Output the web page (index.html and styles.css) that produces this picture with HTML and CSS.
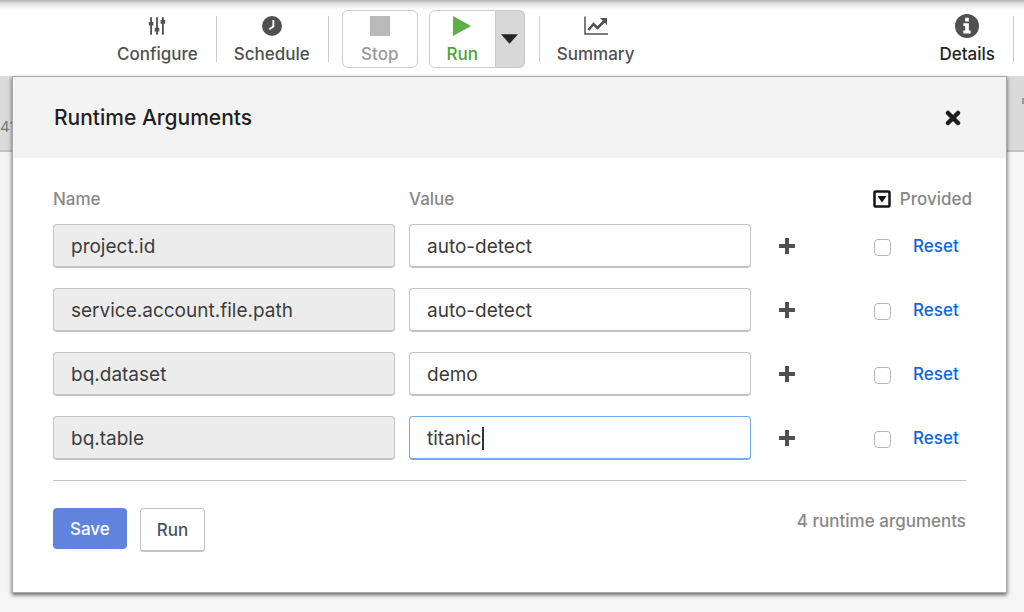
FILE: index.html
```html
<!DOCTYPE html>
<html lang="en">
<head>
<meta charset="utf-8">
<title>Runtime Arguments</title>
<link rel="stylesheet" href="styles.css">
</head>
<body>
<header class="toolbar">
  <button class="tool" type="button">
    <svg class="icon" viewBox="0 0 22 22" aria-hidden="true"><path d="M4.500 1.500v19M11 1.500v19M17.500 1.500v19" stroke="currentColor" stroke-width="2"/><path d="M2 6.500h5v4h-5zM8.500 13h5v4h-5zM15 4.500h5v4h-5z" fill="currentColor"/></svg>
    <span>Configure</span>
  </button>
  <button class="tool divided" type="button">
    <svg class="icon" viewBox="0 0 22 22" aria-hidden="true"><circle cx="11" cy="11" r="11" fill="currentColor"/><path d="M12.500 4.500v7L8 14.500" fill="none" stroke="#fff" stroke-width="2"/></svg>
    <span>Schedule</span>
  </button>
  <div class="actions divided">
    <button class="boxed stop" type="button" disabled>
      <svg class="icon" viewBox="0 0 22 22" aria-hidden="true"><path d="M0 0h22v22H0z" fill="#b9b9b9"/></svg>
      <span>Stop</span>
    </button>
    <div class="split">
      <button class="boxed run" type="button">
        <svg class="icon" viewBox="0 0 22 22" aria-hidden="true"><path d="M1 0l20 11L1 22z" fill="#5fae46"/></svg>
        <span>Run</span>
      </button>
      <button class="run-menu" type="button" aria-label="Run options">
        <svg class="caret" viewBox="0 0 18 10" aria-hidden="true"><path d="M0 0h18L9 10z" fill="#262626"/></svg>
      </button>
    </div>
  </div>
  <button class="tool divided" type="button">
    <svg class="icon wide" viewBox="0 0 26 22" aria-hidden="true"><path d="M2 1.500V19h23" fill="none" stroke="currentColor" stroke-width="1.500"/><path d="M5.500 15l5-6 4 4L22 5.500" fill="none" stroke="currentColor" stroke-width="2.500"/><path d="M17 3h7v7z" fill="currentColor"/></svg>
    <span>Summary</span>
  </button>
  <button class="tool details" type="button">
    <svg class="icon wide" viewBox="0 0 26 26" aria-hidden="true"><circle cx="13" cy="13" r="13" fill="currentColor"/><path d="M11 4h4v4h-4zM9 10h6v8h2v3H9v-3h2v-5H9z" fill="#fff"/></svg>
    <span>Details</span>
  </button>
  <div class="end divided"></div>
</header>
<div class="status-bar"><span>41</span><i class="status-dot"></i></div>

<section class="modal" role="dialog" aria-labelledby="title">
  <div class="modal-head">
    <h1 class="title" id="title">Runtime Arguments</h1>
    <button class="close" type="button" aria-label="Close"><svg viewBox="0 0 16 16" aria-hidden="true"><path d="M3 3l10 10M13 3L3 13" stroke="#1d1d1d" stroke-width="4.500" stroke-linecap="round"/></svg></button>
  </div>
  <form class="modal-body">
    <div class="row heads">
      <span id="h-name">Name</span>
      <span id="h-value">Value</span>
      <div class="provided">
        <button class="toggle-all" type="button" aria-label="Select provided"><svg viewBox="0 0 18 18" aria-hidden="true"><rect x="1.500" y="1.500" width="15" height="15" rx="1" fill="#fff" stroke="#151515" stroke-width="2.500"/><path d="M4.500 6h9L9 12.500z" fill="#151515"/></svg></button>
        <span>Provided</span>
      </div>
    </div>
    <div class="row">
      <input class="field" type="text" value="project.id" aria-labelledby="h-name" disabled>
      <input class="field" type="text" value="auto-detect" aria-labelledby="h-value">
      <div class="controls"><button class="add" type="button" aria-label="Add row"><svg viewBox="0 0 16 16" aria-hidden="true"><path d="M8 0v16M0 8h16" stroke="#505050" stroke-width="4"/></svg></button><input class="check" type="checkbox" aria-label="Provided"><a class="reset" href="#">Reset</a></div>
    </div>
    <div class="row">
      <input class="field" type="text" value="service.account.file.path" aria-labelledby="h-name" disabled>
      <input class="field" type="text" value="auto-detect" aria-labelledby="h-value">
      <div class="controls"><button class="add" type="button" aria-label="Add row"><svg viewBox="0 0 16 16" aria-hidden="true"><path d="M8 0v16M0 8h16" stroke="#505050" stroke-width="4"/></svg></button><input class="check" type="checkbox" aria-label="Provided"><a class="reset" href="#">Reset</a></div>
    </div>
    <div class="row">
      <input class="field" type="text" value="bq.dataset" aria-labelledby="h-name" disabled>
      <input class="field" type="text" value="demo" aria-labelledby="h-value">
      <div class="controls"><button class="add" type="button" aria-label="Add row"><svg viewBox="0 0 16 16" aria-hidden="true"><path d="M8 0v16M0 8h16" stroke="#505050" stroke-width="4"/></svg></button><input class="check" type="checkbox" aria-label="Provided"><a class="reset" href="#">Reset</a></div>
    </div>
    <div class="row">
      <input class="field" type="text" value="bq.table" aria-labelledby="h-name" disabled>
      <div class="editing"><input class="field active" type="text" value="titanic" aria-labelledby="h-value"><i class="text-caret"></i></div>
      <div class="controls"><button class="add" type="button" aria-label="Add row"><svg viewBox="0 0 16 16" aria-hidden="true"><path d="M8 0v16M0 8h16" stroke="#505050" stroke-width="4"/></svg></button><input class="check" type="checkbox" aria-label="Provided"><a class="reset" href="#">Reset</a></div>
    </div>
    <footer class="footer">
      <button class="btn primary" type="button">Save</button>
      <button class="btn outline" type="button">Run</button>
      <span class="count">4 runtime arguments</span>
    </footer>
  </form>
</section>
</body>
</html>
```
FILE: styles.css
```css
* { box-sizing: border-box; }
body {
  margin: 0;
  min-height: 100vh;
  background: #f5f5f5;
  color: #4a4a4a;
  font-family: Inter, "Liberation Sans", sans-serif;
  font-size: 17px;
  font-weight: 500;
  line-height: 24px;
}
button, input { font: inherit; color: inherit; }
button { border: 0; padding: 0; background: none; }
svg { display: block; }

.toolbar {
  display: flex;
  align-items: center;
  height: 76px;
  padding: 2px 0 0 99px;
  background: linear-gradient(#b4b4b4, #e4e4e4 4px, #fff 10px);
}
.tool, .boxed {
  display: flex;
  flex-direction: column;
  align-items: center;
  justify-content: center;
  gap: 6px;
  height: 58px;
  padding-top: 3px;
}
.tool { padding: 3px 18px 0; color: #505050; }
.icon { width: 20px; height: 20px; }
.icon.wide { width: 26px; height: 24px; margin: -2px 0; }
.divided {
  background: linear-gradient(#ccc, #ccc) left center / 1px 46px no-repeat;
}
.actions { display: flex; gap: 11px; padding: 0 14px; }
.boxed { border: 1px solid #ccc; border-radius: 6px; background: #fff; }
.stop { width: 76px; color: #9a9a9a; }
.split { display: flex; }
.run { width: 67px; color: #46a52f; border-radius: 6px 0 0 6px; }
.run-menu {
  display: flex;
  align-items: center;
  justify-content: center;
  width: 29px;
  border: 1px solid #c4c4c4;
  border-left: 0;
  border-radius: 0 6px 6px 0;
  background: #d8d8d8;
}
.caret { width: 17px; height: 10px; }
.details { margin-left: auto; }
.details span { color: #262626; }
.end { width: 11px; height: 58px; }

.status-bar {
  display: flex;
  justify-content: space-between;
  align-items: center;
  height: 76px;
  padding-top: 28px;
  border-bottom: 2px solid #c4c4c4;
  background: #dadada;
  font-size: 15px;
  font-weight: 400;
  color: #777;
}
.status-dot { width: 2px; height: 6px; margin-bottom: 52px; background: #999; }

.modal {
  position: absolute;
  top: 77px;
  left: 13px;
  right: 18px;
  background: #fff;
  box-shadow: 0 0 0 1px #aaa, 0 2px 4px 1px rgba(0, 0, 0, .6);
}
.modal-head {
  display: flex;
  align-items: center;
  justify-content: space-between;
  height: 81px;
  padding: 0 45px 0 41px;
  background: #f3f3f3;
}
.title { margin: 0; font-size: 21px; font-weight: 500; color: #1f1f1f; }
.close svg { width: 16px; height: 16px; }

.modal-body { padding: 29px 34px 40px 40px; }
.row {
  display: grid;
  grid-template-columns: 1fr 1fr 207px;
  gap: 14px;
  margin-bottom: 20px;
}
.heads { margin-bottom: 13px; color: #888; }
.provided { display: flex; align-items: center; justify-content: flex-end; gap: 9px; }
.toggle-all svg { width: 18px; height: 18px; }
.field {
  width: 100%;
  height: 44px;
  padding: 2px 17px 0;
  border: 1px solid #c4c4c4;
  border-bottom-width: 2px;
  border-radius: 4px;
  background: #fff;
  color: #3c3c3c;
  font-size: 19px;
  font-weight: 400;
  outline: 0;
}
.field:disabled { background: #ececec; color: #3c3c3c; }
.field.active { border-color: #74ace8; }
.editing { position: relative; }
.text-caret {
  position: absolute;
  top: 11px;
  left: 73px;
  width: 2px;
  height: 23px;
  background: #333;
}
.controls { display: flex; align-items: center; }
.add { display: flex; justify-content: center; width: 44px; }
.add svg { width: 16px; height: 16px; }
.check {
  appearance: none;
  width: 17px;
  height: 17px;
  margin: 2px 22px 0 65px;
  border: 1px solid #b5b5b5;
  border-radius: 4px;
  background: #fff;
}
.reset { color: #1365d2; text-decoration: none; }

.footer {
  display: flex;
  align-items: flex-start;
  gap: 13px;
  margin-right: 6px;
  padding-top: 27px;
  border-top: 1px solid #c4c4c4;
}
.btn { height: 41px; padding: 0 17px; border-radius: 4px; }
.primary { background: #6084de; color: #fff; }
.outline { height: 44px; padding: 0 16px; border: 1px solid #c4c4c4; border-bottom-width: 2px; background: #fff; color: #4b5268; }
.count { margin-left: auto; padding-top: 1px; color: #888; }
```
